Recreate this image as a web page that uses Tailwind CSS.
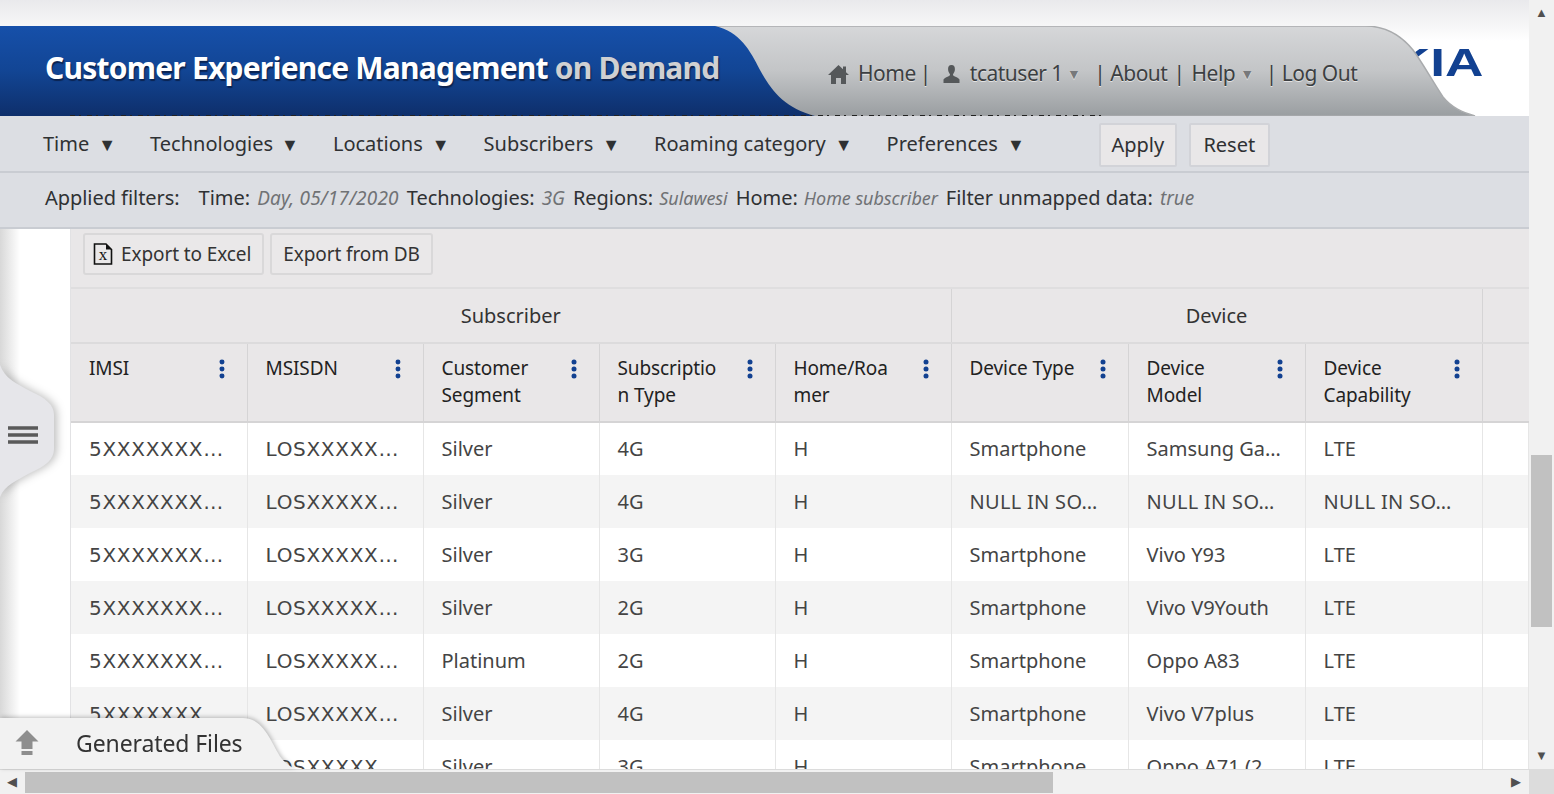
<!DOCTYPE html>
<html lang="en">
  <head>
    <meta charset="UTF-8" />
    <title>Customer Experience Management on Demand</title>
    <script src="https://cdn.jsdelivr.net/npm/@tailwindcss/browser@4"></script>
  </head>
  <body class="h-screen overflow-hidden bg-white font-['Noto_Sans',sans-serif] text-[#333]">
    <div class="relative flex h-[794px] w-[1554px]">
      <!-- Page column -->
      <div class="flex h-[769px] w-[1529px] flex-col overflow-hidden">
        <!-- Header -->
        <header class="relative h-[116px] shrink-0 overflow-hidden bg-gradient-to-b from-[#e9e9ec] from-0% via-[#f6f6f7] via-22% to-white to-35%">
          <span class="absolute right-[46px] top-[39px] origin-right scale-x-[1.4] font-['Liberation_Sans',sans-serif] text-[38px] font-bold leading-[48px] text-[#124191]">NOKIA</span>
          <svg class="absolute left-0 top-[26px]" width="1529" height="90" viewBox="0 0 1529 90">
            <defs>
              <linearGradient id="blue" x1="0" y1="0" x2="0" y2="1">
                <stop offset="0" stop-color="#1650aa" />
                <stop offset="0.5" stop-color="#124594" />
                <stop offset="1" stop-color="#0e2f6b" />
              </linearGradient>
              <linearGradient id="grey" x1="0" y1="0" x2="0" y2="1">
                <stop offset="0" stop-color="#d6d7d9" />
                <stop offset="0.5" stop-color="#c3c5c7" />
                <stop offset="1" stop-color="#9a9ea1" />
              </linearGradient>
            </defs>
            <path d="M715 0H1365C1385 0 1400 8 1413 24C1422 36 1430 51 1443 71C1452 82 1462 86 1475 90H790L715 0Z" fill="url(#grey)" stroke="#a9abad" stroke-width="1.500" />
            <path d="M0 0H715C740 6 750 24 760 44C772 66 785 82 815 90H0Z" fill="url(#blue)" />
          </svg>
          <div class="absolute left-[70px] top-[115px] h-[1px] w-[1034px] bg-[repeating-linear-gradient(90deg,#222_0_5px,transparent_5px_9px,#222_9px_11px,transparent_11px_17px)]"></div>
          <h1 class="absolute left-[45px] top-[47px] text-[30px] font-bold leading-[42px] tracking-[-0.78px] text-white [text-shadow:1px_2px_1px_#0b2350]">Customer Experience Management <span class="text-[#cfd0d2]">on Demand</span></h1>
          <nav class="absolute left-[828px] top-[59px] flex h-[30px] items-center text-[21px] tracking-[-0.5px] text-[#3c3f42] [text-shadow:0_1px_0_#e4e4e4]">
            <svg class="mr-[9px]" width="21" height="20" viewBox="0 0 21 20"><path d="M10.500 1 15 5.300V2.500h3v5.700l3 2.800h-3v9h-5v-6H8v6H3v-9H0Z" fill="#55585a" /></svg>
            <span>Home</span><span class="ml-[4px]">|</span>
            <svg class="ml-[11px] mr-[9px]" width="19" height="19" viewBox="0 0 19 19"><path d="M9.500 0c2.600 0 3.600 2 3.400 4.600-.1 2-.9 3.400-1.700 4.300-.5.700-.2 1.600.7 2 2 .9 4.800 1.700 5.600 3.700V18H1.500v-3.400c.8-2 3.600-2.800 5.600-3.700.9-.4 1.200-1.300.7-2-.8-.9-1.600-2.300-1.700-4.300C5.900 2 6.900 0 9.500 0Z" fill="#55585a" /></svg>
            <span>tcatuser 1</span><span class="ml-[4px] text-[14px] leading-[20px] text-[#77797b]">▼</span>
            <span class="ml-[14px]">|</span><span class="ml-[5px]">About</span>
            <span class="ml-[6px]">|</span><span class="ml-[7px]">Help</span><span class="ml-[5px] text-[14px] leading-[20px] text-[#77797b]">▼</span>
            <span class="ml-[12px]">|</span><span class="ml-[5px]">Log Out</span>
          </nav>
        </header>

        <!-- Filter menu -->
        <div class="flex h-[57px] shrink-0 items-start border-b-2 border-[#c9ccd2] bg-[#dcdee3] text-[20px] text-[#2f3133]">
          <div class="mt-[12px] flex h-[32px] items-center pl-[43px]">
            <span>Time</span><span class="ml-[9px] text-[18px] leading-[20px]">▼</span>
            <span class="ml-[34px]">Technologies</span><span class="ml-[8px] text-[18px] leading-[20px]">▼</span>
            <span class="ml-[34px]">Locations</span><span class="ml-[9px] text-[18px] leading-[20px]">▼</span>
            <span class="ml-[34px]">Subscribers</span><span class="ml-[9px] text-[18px] leading-[20px]">▼</span>
            <span class="ml-[34px]">Roaming category</span><span class="ml-[9px] text-[18px] leading-[20px]">▼</span>
            <span class="ml-[34px]">Preferences</span><span class="ml-[9px] text-[18px] leading-[20px]">▼</span>
          </div>
          <div class="ml-[74px] mt-[7px] flex gap-[12px]">
            <button class="h-[44px] w-[78px] rounded-[2px] border-2 border-[#d2d3d8] bg-[#e9e7e8] text-[20px]">Apply</button>
            <button class="h-[44px] w-[81px] rounded-[2px] border-2 border-[#d2d3d8] bg-[#e9e7e8] text-[20px]">Reset</button>
          </div>
        </div>

        <!-- Applied filters -->
        <div class="flex h-[56px] shrink-0 items-center whitespace-pre border-b-2 border-[#c9ccd2] bg-[#dcdee3] pl-[45px] pb-[4px] text-[20px] tracking-[-0.05px] text-[#2f3133]">
          <span class="mr-[19px]">Applied filters:</span>
          <span>Time: </span><i class="ml-[2px] mr-[8px] text-[19px] tracking-[0.2px] text-[#707275]">Day, 05/17/2020</i>
          <span>Technologies: </span><i class="ml-[2px] mr-[8px] text-[19px] text-[#707275]">3G</i>
          <span>Regions: </span><i class="ml-[1px] mr-[8px] text-[18px] text-[#707275]">Sulawesi</i>
          <span>Home: </span><i class="ml-[1px] mr-[8px] text-[18px] text-[#707275]">Home subscriber</i>
          <span>Filter unmapped data: </span><i class="ml-[2px] text-[19px] text-[#707275]">true</i>
        </div>

        <!-- Content -->
        <div class="flex min-h-0 flex-1">
          <aside class="w-[70px] shrink-0 bg-white"></aside>
          <main class="min-w-0 flex-1 border-l border-[#e2e2e4]">
            <div class="flex h-[60px] gap-[6px] border-b-2 border-[#dfdedf] bg-[#e9e7e8] pl-[12px] pt-[4px] text-[19px] tracking-[-0.1px]">
              <button class="flex h-[42px] w-[181px] items-center gap-[8px] rounded-[3px] border-2 border-[#d9d8d9] bg-[#eae8e9] pl-[8px]">
                <svg width="20" height="22" viewBox="0 0 20 22"><path d="M1.500 1H13l5.500 5.500V21H1.500Z" fill="none" stroke="#111" stroke-width="1.600" /><path d="M13 1v5.500h5.500Z" fill="#111" /><text x="10" y="17" text-anchor="middle" font-family="Liberation Serif" font-size="17" fill="#111">x</text></svg>
                Export to Excel
              </button>
              <button class="h-[42px] w-[163px] rounded-[3px] border-2 border-[#d9d8d9] bg-[#eae8e9]">Export from DB</button>
            </div>
            <table class="w-[1458px] table-fixed border-collapse text-[20px] text-[#444]">
              <colgroup>
                <col class="w-[176px]" /><col class="w-[176px]" /><col class="w-[176px]" /><col class="w-[176px]" /><col class="w-[176px]" /><col class="w-[177px]" /><col class="w-[177px]" /><col class="w-[177px]" /><col />
              </colgroup>
              <thead class="bg-[#e9e7e8] text-[#333]">
                <tr class="h-[54px] border-b-2 border-[#dcdbdc] text-center font-normal">
                  <th colspan="5" class="border-r border-[#d5d4d5] font-normal">Subscriber</th>
                  <th colspan="3" class="border-r border-[#d5d4d5] font-normal">Device</th>
                  <th></th>
                </tr>
                <tr class="h-[79px] border-b-2 border-[#d5d4d5] align-top text-[19px] leading-[27px] tracking-[-0.1px] text-[#222]">
                  <th class="border-r border-[#d5d4d5] font-normal"><div class="flex justify-between pl-[18px] pr-[22px] pt-[11px] text-left"><span class="w-[130px]">IMSI</span><svg class="mt-[4px]" width="6" height="20" viewBox="0 0 6 20" fill="#124191"><circle cx="3" cy="3" r="2.500" /><circle cx="3" cy="10" r="2.500" /><circle cx="3" cy="17" r="2.500" /></svg></div></th>
                  <th class="border-r border-[#d5d4d5] font-normal"><div class="flex justify-between pl-[18px] pr-[22px] pt-[11px] text-left"><span class="w-[130px]">MSISDN</span><svg class="mt-[4px]" width="6" height="20" viewBox="0 0 6 20" fill="#124191"><circle cx="3" cy="3" r="2.500" /><circle cx="3" cy="10" r="2.500" /><circle cx="3" cy="17" r="2.500" /></svg></div></th>
                  <th class="border-r border-[#d5d4d5] font-normal"><div class="flex justify-between pl-[18px] pr-[22px] pt-[11px] text-left"><span class="w-[110px]">Customer Segment</span><svg class="mt-[4px]" width="6" height="20" viewBox="0 0 6 20" fill="#124191"><circle cx="3" cy="3" r="2.500" /><circle cx="3" cy="10" r="2.500" /><circle cx="3" cy="17" r="2.500" /></svg></div></th>
                  <th class="border-r border-[#d5d4d5] font-normal"><div class="flex justify-between pl-[18px] pr-[22px] pt-[11px] text-left"><span class="w-[105px] break-all">Subscription Type</span><svg class="mt-[4px]" width="6" height="20" viewBox="0 0 6 20" fill="#124191"><circle cx="3" cy="3" r="2.500" /><circle cx="3" cy="10" r="2.500" /><circle cx="3" cy="17" r="2.500" /></svg></div></th>
                  <th class="border-r border-[#d5d4d5] font-normal"><div class="flex justify-between pl-[18px] pr-[22px] pt-[11px] text-left"><span class="w-[100px] break-all">Home/Roamer</span><svg class="mt-[4px]" width="6" height="20" viewBox="0 0 6 20" fill="#124191"><circle cx="3" cy="3" r="2.500" /><circle cx="3" cy="10" r="2.500" /><circle cx="3" cy="17" r="2.500" /></svg></div></th>
                  <th class="border-r border-[#d5d4d5] font-normal"><div class="flex justify-between pl-[18px] pr-[22px] pt-[11px] text-left"><span class="w-[120px]">Device Type</span><svg class="mt-[4px]" width="6" height="20" viewBox="0 0 6 20" fill="#124191"><circle cx="3" cy="3" r="2.500" /><circle cx="3" cy="10" r="2.500" /><circle cx="3" cy="17" r="2.500" /></svg></div></th>
                  <th class="border-r border-[#d5d4d5] font-normal"><div class="flex justify-between pl-[18px] pr-[22px] pt-[11px] text-left"><span class="w-[100px]">Device Model</span><svg class="mt-[4px]" width="6" height="20" viewBox="0 0 6 20" fill="#124191"><circle cx="3" cy="3" r="2.500" /><circle cx="3" cy="10" r="2.500" /><circle cx="3" cy="17" r="2.500" /></svg></div></th>
                  <th class="border-r border-[#d5d4d5] font-normal"><div class="flex justify-between pl-[18px] pr-[22px] pt-[11px] text-left"><span class="w-[100px]">Device Capability</span><svg class="mt-[4px]" width="6" height="20" viewBox="0 0 6 20" fill="#124191"><circle cx="3" cy="3" r="2.500" /><circle cx="3" cy="10" r="2.500" /><circle cx="3" cy="17" r="2.500" /></svg></div></th>
                  <th></th>
                </tr>
              </thead>
              <tbody class="[&_td]:h-[53px] [&_td]:whitespace-nowrap [&_td]:border-r [&_td]:border-[#e6e6e6] [&_td]:pl-[18px] [&_tr:nth-child(even)]:bg-[#f4f4f4]">
                <tr><td class="font-['DejaVu_Sans'] tracking-[0.7px]">5XXXXXXX…</td><td class="font-['DejaVu_Sans'] tracking-[0.7px]">LOSXXXXX…</td><td>Silver</td><td>4G</td><td>H</td><td>Smartphone</td><td>Samsung Ga…</td><td>LTE</td><td></td></tr>
                <tr><td class="font-['DejaVu_Sans'] tracking-[0.7px]">5XXXXXXX…</td><td class="font-['DejaVu_Sans'] tracking-[0.7px]">LOSXXXXX…</td><td>Silver</td><td>4G</td><td>H</td><td class="tracking-[0.3px]">NULL IN SO…</td><td class="tracking-[0.3px]">NULL IN SO…</td><td class="tracking-[0.3px]">NULL IN SO…</td><td></td></tr>
                <tr><td class="font-['DejaVu_Sans'] tracking-[0.7px]">5XXXXXXX…</td><td class="font-['DejaVu_Sans'] tracking-[0.7px]">LOSXXXXX…</td><td>Silver</td><td>3G</td><td>H</td><td>Smartphone</td><td>Vivo Y93</td><td>LTE</td><td></td></tr>
                <tr><td class="font-['DejaVu_Sans'] tracking-[0.7px]">5XXXXXXX…</td><td class="font-['DejaVu_Sans'] tracking-[0.7px]">LOSXXXXX…</td><td>Silver</td><td>2G</td><td>H</td><td>Smartphone</td><td>Vivo V9Youth</td><td>LTE</td><td></td></tr>
                <tr><td class="font-['DejaVu_Sans'] tracking-[0.7px]">5XXXXXXX…</td><td class="font-['DejaVu_Sans'] tracking-[0.7px]">LOSXXXXX…</td><td>Platinum</td><td>2G</td><td>H</td><td>Smartphone</td><td>Oppo A83</td><td>LTE</td><td></td></tr>
                <tr><td class="font-['DejaVu_Sans'] tracking-[0.7px]">5XXXXXXX…</td><td class="font-['DejaVu_Sans'] tracking-[0.7px]">LOSXXXXX…</td><td>Silver</td><td>4G</td><td>H</td><td>Smartphone</td><td>Vivo V7plus</td><td>LTE</td><td></td></tr>
                <tr><td class="font-['DejaVu_Sans'] tracking-[0.7px]">5XXXXXXX…</td><td class="font-['DejaVu_Sans'] tracking-[0.7px]">LOSXXXXX…</td><td>Silver</td><td>3G</td><td>H</td><td>Smartphone</td><td>Oppo A71 (2…</td><td>LTE</td><td></td></tr>
              </tbody>
            </table>
          </main>
        </div>
      </div>

      <!-- Vertical scrollbar -->
      <div class="flex h-[769px] w-[25px] shrink-0 flex-col items-center bg-[#f1f1f1] text-[#505050]">
        <span class="mt-[5px] text-[13px] leading-[14px]">▲</span>
        <div class="mt-[436px] h-[172px] w-[21px] bg-[#c1c1c1]"></div>
        <span class="mt-auto mb-[7px] text-[13px] leading-[14px]">▼</span>
      </div>

      <!-- Horizontal scrollbar -->
      <div class="absolute bottom-0 left-0 flex h-[25px] w-[1529px] items-center border-t border-[#dcdcdc] bg-[#f1f1f1] text-[#505050]">
        <span class="ml-[7px] w-[9px] text-[13px]">◀</span>
        <div class="ml-[9px] h-[21px] w-[1028px] bg-[#c1c1c1]"></div>
        <span class="ml-auto mr-[8px] text-[13px]">▶</span>
      </div>
      <div class="absolute bottom-0 right-0 h-[25px] w-[25px] bg-[#dcdcdc]"></div>

      <!-- Side drawer handle -->
      <div class="absolute left-0 top-[229px] h-[540px] w-[20px] bg-gradient-to-r from-[#d8d8d8] to-white"></div>
      <svg class="absolute left-0 top-[355px] drop-shadow-[3px_0_4px_rgba(0,0,0,0.25)]" width="66" height="160" viewBox="0 0 66 160">
        <path d="M0 10C5 24 16 28 30 36C46 43 54 50 54 60V94C54 104 46 111 30 118C16 126 5 130 0 142Z" fill="#e6e6ea" />
        <path d="M8 73H38M8 80H38M8 87H38" stroke="#5a5a5a" stroke-width="3.500" />
      </svg>

      <!-- Generated files tab -->
      <div class="absolute bottom-[25px] left-0 h-[52px] w-[296px] drop-shadow-[1px_-1px_2px_rgba(0,0,0,0.25)]">
        <svg class="absolute inset-0" width="296" height="52" viewBox="0 0 296 52">
          <path d="M0 1H243C262 1 270 22 278 36C282 44 290 50 296 52H0Z" fill="#f2f2f2" />
        </svg>
        <div class="relative flex h-full items-center">
          <svg class="ml-[15px]" width="24" height="26" viewBox="0 0 24 26"><path d="M12 0 23.500 11.500H17.500V19H6.500V11.500H.5Z" fill="#8e8e8e" /><path d="M6.500 21H17.500V25H6.500Z" fill="#8e8e8e" /></svg>
          <span class="ml-[37px] text-[23px] tracking-[-0.1px] text-[#333]">Generated Files</span>
        </div>
      </div>
    </div>
  </body>
</html>
